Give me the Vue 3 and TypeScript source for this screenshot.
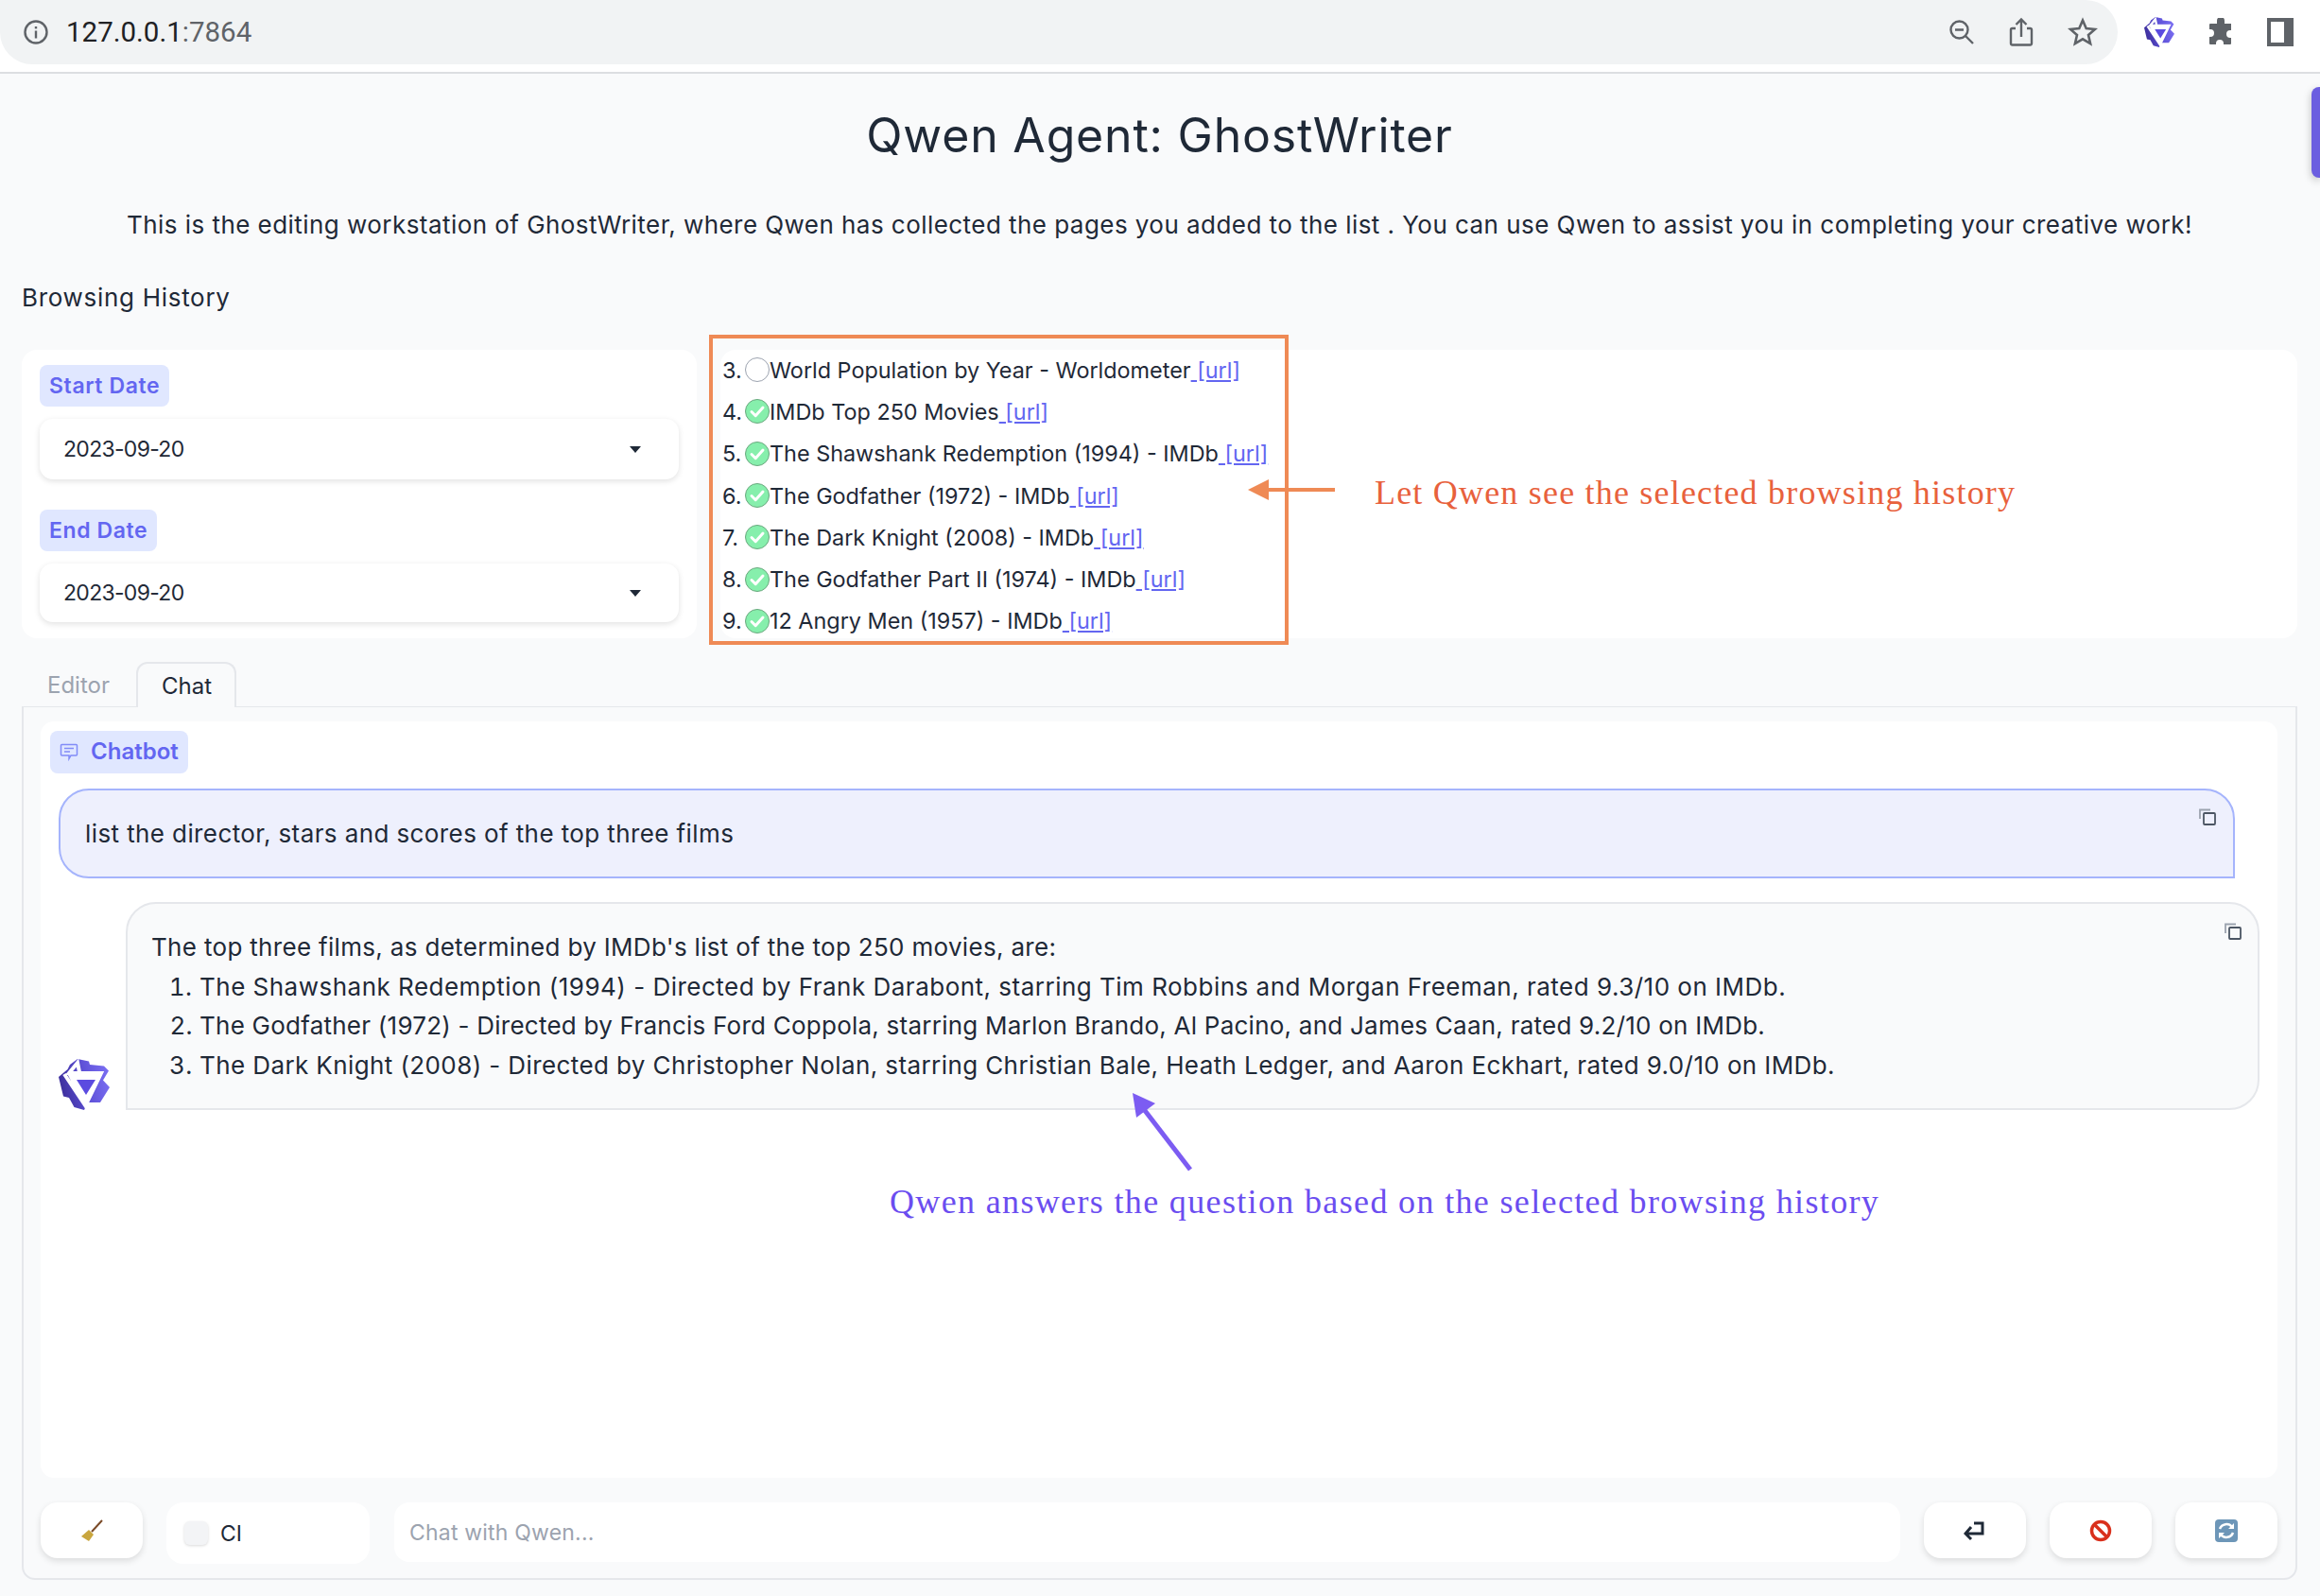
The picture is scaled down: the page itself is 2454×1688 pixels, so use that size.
<script setup lang="ts">
interface HistoryRow {
  index: number
  title: string
  checked: boolean
}

const historyRows: HistoryRow[] = [
  { index: 3, title: 'World Population by Year - Worldometer', checked: false },
  { index: 4, title: 'IMDb Top 250 Movies', checked: true },
  { index: 5, title: 'The Shawshank Redemption (1994) - IMDb', checked: true },
  { index: 6, title: 'The Godfather (1972) - IMDb', checked: true },
  { index: 7, title: 'The Dark Knight (2008) - IMDb', checked: true },
  { index: 8, title: 'The Godfather Part II (1974) - IMDb', checked: true },
  { index: 9, title: '12 Angry Men (1957) - IMDb', checked: true },
]

const dateFields = ['Start Date', 'End Date']

const answers = [
  'The Shawshank Redemption (1994) - Directed by Frank Darabont, starring Tim Robbins and Morgan Freeman, rated 9.3/10 on IMDb.',
  'The Godfather (1972) - Directed by Francis Ford Coppola, starring Marlon Brando, Al Pacino, and James Caan, rated 9.2/10 on IMDb.',
  'The Dark Knight (2008) - Directed by Christopher Nolan, starring Christian Bale, Heath Ledger, and Aaron Eckhart, rated 9.0/10 on IMDb.',
]

// logo outline and its white strands, shared by the toolbar icon and the avatar
const logoOutline = 'M20 0 32 2.400 33 6 48 7.400 53 12.500 47 22.600 54 30 44 46H31L27 54 16.500 51 11 41 5 39.500 0 19 9.500 11 12 6z'
const logoStrands = 'M20 4 11 15H45L29 48zM6 16 30 52M11 15 29 48'
const logoCore = 'M19 22H39L29 38z'
</script>

<template>
  <div class="page">
    <header class="browser">
      <div class="address">
        <svg class="info" viewBox="0 0 28 28" width="28" height="28">
          <circle cx="14" cy="14" r="11.5" fill="none" stroke="#5f6368" stroke-width="2.4" />
          <rect x="12.8" y="12.5" width="2.4" height="8" fill="#5f6368" />
          <rect x="12.8" y="8" width="2.4" height="2.4" fill="#5f6368" />
        </svg>
        <span class="host">127.0.0.1<span class="port">:7864</span></span>
        <div class="address-icons">
          <svg viewBox="0 0 28 28" width="28" height="28" fill="none" stroke="#5f6368" stroke-width="2.4">
            <circle cx="11.5" cy="11.5" r="9" />
            <path d="M7 11.5h9M18 18l8 8" />
          </svg>
          <svg viewBox="0 0 28 32" width="28" height="32" fill="none" stroke="#5f6368" stroke-width="2.4">
            <path d="M8 12H4.500a1.500 1.500 0 0 0-1.500 1.500V28a1.500 1.500 0 0 0 1.500 1.500h19A1.500 1.500 0 0 0 25 28V13.500a1.500 1.500 0 0 0-1.500-1.500H20" />
            <path d="M14 21V3M8.500 8 14 2.500 19.500 8" />
          </svg>
          <svg viewBox="0 0 32 32" width="32" height="32" fill="none" stroke="#5f6368" stroke-width="2.6">
            <path d="M16 3.500l3.700 8.500 9.300.9-7 6.100 2.100 9.100-8.100-4.800-8.100 4.800 2.100-9.100-7-6.100 9.300-.9z" />
          </svg>
        </div>
      </div>
      <div class="extensions">
        <svg viewBox="0 0 54 54" width="32" height="32">
          <defs>
            <linearGradient id="logoFillSmall" x1="0" y1="0.6" x2="1" y2="0.4">
              <stop offset="0" stop-color="#3a2c98" />
              <stop offset="0.55" stop-color="#5f52d8" />
              <stop offset="1" stop-color="#7a6ef2" />
            </linearGradient>
          </defs>
          <path :d="logoOutline" fill="url(#logoFillSmall)" />
          <path :d="logoStrands" fill="none" stroke="#fff" stroke-width="4" />
          <path d="M11 15H45L29 48z" fill="#fff" />
          <path :d="logoCore" fill="#5b4be0" />
        </svg>
        <svg viewBox="0 0 30 30" width="30" height="30">
          <path d="M11 3a4 4 0 0 1 8 0v3h7v7h-1a4 4 0 0 0 0 8h1v6a1 1 0 0 1-1 1h-7v-1a4 4 0 0 0-8 0v1H4a1 1 0 0 1-1-1v-7h1a4 4 0 0 0 0-8H3V7a1 1 0 0 1 1-1h7z" fill="#5f6368" />
        </svg>
        <svg viewBox="0 0 28 30" width="28" height="30">
          <path d="M0 0h28v30H0zM4 4v22h14V4z" fill="#5f6368" fill-rule="evenodd" />
        </svg>
      </div>
    </header>

    <div class="scroll-tab"></div>

    <main class="content">
      <h1 class="title">Qwen Agent: GhostWriter</h1>
      <p class="intro">
        This is the editing workstation of GhostWriter, where Qwen has collected the pages you added to the list . You can use Qwen to assist you in completing your creative work!
      </p>
      <div class="section-name">Browsing History</div>

      <section class="history">
        <div class="dates">
          <div v-for="field in dateFields" :key="field" class="date-field">
            <span class="badge">{{ field }}</span>
            <div class="select">
              <span class="date-value">2023-09-20</span>
              <span class="caret"></span>
            </div>
          </div>
        </div>
        <div class="pages">
          <div v-for="row in historyRows" :key="row.index" class="page-row">
            <span class="page-num">{{ row.index }}.</span>
            <span class="tick" :class="{ on: row.checked }">
              <svg v-if="row.checked" viewBox="0 0 24 24" width="24" height="24">
                <path d="M6 12.500l4.200 4.200L18 8" fill="none" stroke="#fff" stroke-width="3" stroke-linecap="round" stroke-linejoin="round" />
              </svg>
            </span>
            <span class="page-title">{{ row.title }}</span><a class="page-link" href="#"> [url]</a>
          </div>
        </div>
      </section>

      <nav class="tabs">
        <span class="tab">Editor</span>
        <span class="tab active">Chat</span>
      </nav>

      <section class="panel">
        <div class="chat-card">
          <span class="badge chat-badge">
            <svg viewBox="0 0 20 20" width="20" height="20" fill="none" stroke="#818cf8" stroke-width="1.500">
              <path d="M2.500 2.500h15a1 1 0 0 1 1 1v9.500a1 1 0 0 1-1 1h-5.500l-2 3.500v-3.500H2.500a1 1 0 0 1-1-1V3.500a1 1 0 0 1 1-1z" />
              <path d="M5 6.500h10M5 10h6" />
            </svg>
            Chatbot
          </span>

          <div class="bubble user">
            list the director, stars and scores of the top three films
            <svg class="copy" viewBox="0 0 18 18" width="18" height="18" fill="none" stroke-width="1.800">
              <path d="M1 11V1.500h11" stroke="#9ca3af" />
              <rect x="5" y="5" width="12" height="12" rx="1" stroke="#4b5563" />
            </svg>
          </div>

          <div class="bot-row">
            <svg class="avatar" viewBox="0 0 54 54" width="54" height="54">
              <defs>
                <linearGradient id="logoFill" x1="0" y1="0.6" x2="1" y2="0.4">
                  <stop offset="0" stop-color="#3a2c98" />
                  <stop offset="0.55" stop-color="#5f52d8" />
                  <stop offset="1" stop-color="#7a6ef2" />
                </linearGradient>
              </defs>
              <path :d="logoOutline" fill="url(#logoFill)" />
              <path :d="logoStrands" fill="none" stroke="#fff" stroke-width="4" />
              <path d="M11 15H45L29 48z" fill="#fff" />
              <path :d="logoCore" fill="#5b4be0" />
            </svg>
            <div class="bubble bot">
              <p>The top three films, as determined by IMDb's list of the top 250 movies, are:</p>
              <ol>
                <li v-for="answer in answers" :key="answer">{{ answer }}</li>
              </ol>
              <svg class="copy" viewBox="0 0 18 18" width="18" height="18" fill="none" stroke-width="1.800">
                <path d="M1 11V1.500h11" stroke="#9ca3af" />
                <rect x="5" y="5" width="12" height="12" rx="1" stroke="#4b5563" />
              </svg>
            </div>
          </div>
        </div>

        <div class="controls">
          <button class="btn">
            <svg viewBox="0 0 24 24" width="24" height="24">
              <path d="M23 1 12 13" stroke="#7a4a28" stroke-width="2" />
              <path d="M9 11l5 5-5 7-8-5z" fill="#c9a63e" />
            </svg>
          </button>
          <label class="ci"><span class="ci-box"></span>CI</label>
          <div class="chat-input">Chat with Qwen...</div>
          <button class="btn">
            <svg viewBox="0 0 24 24" width="24" height="24" fill="none" stroke="#1f2937" stroke-width="3">
              <path d="M2 15h18V4h-9M8 8 2 15l6 6" />
            </svg>
          </button>
          <button class="btn">
            <svg viewBox="0 0 24 24" width="24" height="24" fill="none" stroke="#d9301c" stroke-width="3.500">
              <circle cx="12" cy="12" r="9.500" />
              <path d="M5 5l14 14" />
            </svg>
          </button>
          <button class="btn">
            <svg viewBox="0 0 24 24" width="24" height="24">
              <rect width="24" height="24" rx="4" fill="#6d96b8" />
              <path d="M5 10a7.500 7.500 0 0 1 13-2M19 14a7.500 7.500 0 0 1-13 2" fill="none" stroke="#fff" stroke-width="2.500" />
              <path d="M20 4v6h-6zM4 20v-6h6z" fill="#fff" />
            </svg>
          </button>
        </div>
      </section>
    </main>

    <!-- hand-drawn annotations sitting on top of the screenshot -->
    <div class="mark-box"></div>
    <svg class="mark-arrow orange" viewBox="0 0 100 32" width="100" height="32">
      <path d="M94 16H22" stroke="#ef8a55" stroke-width="4" />
      <path d="M2 16 24 5v22z" fill="#ef8a55" />
    </svg>
    <div class="mark-text red">Let Qwen see the selected browsing history</div>
    <svg class="mark-arrow purple" viewBox="0 0 72 90" width="72" height="90">
      <path d="M66 85 16 20" stroke="#7c5cf2" stroke-width="5" />
      <path d="M5 4 29 15 9 30z" fill="#7c5cf2" />
    </svg>
    <div class="mark-text violet">Qwen answers the question based on the selected browsing history</div>
  </div>
</template>

<style>
html,
body {
  margin: 0;
  background: #f9fafb;
}
</style>

<style scoped>
.page {
  position: relative;
  width: 2454px;
  height: 1688px;
  overflow: hidden;
  background: #f9fafb;
  color: #1f2937;
  font-family: Inter, 'Open Sans', sans-serif;
}

.browser {
  display: flex;
  justify-content: space-between;
  height: 76px;
  background: #fff;
  border-bottom: 2px solid #dcdee1;
}

.address {
  display: flex;
  align-items: center;
  width: 2240px;
  height: 68px;
  box-sizing: border-box;
  padding-left: 24px;
  background: #f1f3f4;
  border-radius: 0 34px 34px 34px;
  font-family: Roboto, sans-serif;
  font-size: 29.5px;
}

.info {
  margin-right: 18px;
}

.host {
  color: #202124;
}

.port {
  color: #5f6368;
}

.address-icons {
  display: flex;
  align-items: center;
  gap: 35px;
  margin-left: auto;
  margin-right: 21px;
}

.extensions {
  display: flex;
  align-items: center;
  gap: 34px;
  height: 68px;
  margin-right: 28px;
}

.scroll-tab {
  position: absolute;
  top: 92px;
  right: 0;
  width: 9px;
  height: 96px;
  background: #6b5ee0;
  border-radius: 8px 0 0 8px;
  box-shadow: 0 3px 8px rgba(0, 0, 0, 0.25);
}

.content {
  padding: 0 24px 0 23px;
}

.title {
  margin: 35px 0 0;
  font-size: 50px;
  line-height: 60px;
  font-weight: 400;
  text-align: center;
  letter-spacing: 0.8px;
}

.intro {
  margin: 47px 0 0;
  font-size: 26px;
  line-height: 36px;
  text-align: center;
  letter-spacing: 0.45px;
}

.section-name {
  margin-top: 43px;
  font-size: 26px;
  line-height: 32px;
  letter-spacing: 0.7px;
}

.history {
  display: flex;
  gap: 25px;
  margin-top: 39px;
  height: 305px;
}

.dates {
  width: 714px;
  box-sizing: border-box;
  padding: 16px 19px 0;
  background: #fff;
  border-radius: 16px;
}

.date-field + .date-field {
  margin-top: 32px;
}

.date-field + .date-field .select {
  height: 62px;
}

.badge {
  display: inline-flex;
  align-items: center;
  height: 44px;
  padding: 0 10px;
  background: #e0e7ff;
  border-radius: 8px;
  color: #6366f1;
  font-size: 23px;
  font-weight: 600;
  letter-spacing: 0.6px;
}

.select {
  display: flex;
  align-items: center;
  justify-content: space-between;
  height: 64px;
  margin-top: 13px;
  padding: 0 40px 0 25px;
  background: #fff;
  border-radius: 14px;
  box-shadow: 0 2px 6px rgba(0, 0, 0, 0.12);
  font-size: 23px;
}

.date-value {
  letter-spacing: -0.7px;
}

.caret {
  border-top: 7px solid #1f2937;
  border-left: 6px solid transparent;
  border-right: 6px solid transparent;
}

.pages {
  flex: 1;
  box-sizing: border-box;
  padding-left: 2px;
  background: #fff;
  border-radius: 16px;
}

.page-row {
  display: flex;
  align-items: center;
  height: 44.3px;
  font-size: 23.4px;
  white-space: pre;
}

.page-row:first-child {
  margin-top: -1px;
}

.page-num {
  width: 24px;
}

.tick {
  display: flex;
  align-items: center;
  justify-content: center;
  width: 26px;
  height: 26px;
  box-sizing: border-box;
  border: 1.500px solid #9ca3af;
  border-radius: 50%;
  background: #fff;
}

.tick.on {
  background: #86efac;
  border-color: #6aa87e;
}

.page-link {
  color: #6366f1;
  text-decoration: underline;
}

.tabs {
  display: flex;
  height: 48px;
  margin-top: 25px;
  margin-bottom: -1px;
}

.tab {
  display: flex;
  align-items: center;
  box-sizing: border-box;
  width: 121px;
  height: 48px;
  padding-left: 27px;
  font-size: 24px;
  color: #9ca3af;
}

.tab.active {
  position: relative;
  z-index: 1;
  width: 106px;
  padding-left: 25px;
  background: #f9fafb;
  color: #1f2937;
  border: 2px solid #e5e7eb;
  border-bottom: none;
  border-radius: 12px 12px 0 0;
}

.panel {
  height: 924px;
  box-sizing: border-box;
  padding: 15px 19px 0 18px;
  border: 2px solid #e5e7eb;
  border-top-width: 1px;
  border-radius: 0 0 14px 14px;
}

.chat-card {
  display: flex;
  flex-direction: column;
  align-items: flex-start;
  height: 800px;
  box-sizing: border-box;
  padding: 10px;
  background: #fff;
  border-radius: 14px;
}

.chat-badge {
  gap: 13px;
  height: 45px;
  padding: 0 10px 2px;
  box-sizing: border-box;
  font-weight: 600;
  font-size: 24px;
  letter-spacing: 0;
}

.bubble {
  position: relative;
  box-sizing: border-box;
  font-size: 26px;
  letter-spacing: 0.4px;
}

.bubble.user {
  display: flex;
  align-items: center;
  width: 2302px;
  height: 95px;
  margin: 16px 0 0 9px;
  padding: 0 26px;
  background: #eef0fd;
  border: 2px solid #a5b4fc;
  border-radius: 32px 32px 0 32px;
}

.bubble.user .copy {
  position: absolute;
  top: 19px;
  right: 18px;
}

.bot-row {
  display: flex;
  align-items: flex-end;
  gap: 17px;
  margin: 25px 0 0 9px;
}

.avatar {
  flex: none;
}

.bubble.bot {
  width: 2257px;
  height: 220px;
  padding: 25px 25px 0;
  background: #f9fafb;
  border: 2px solid #e5e7eb;
  border-radius: 32px 32px 32px 0;
  line-height: 41.7px;
}

.bubble.bot p {
  margin: 0;
  letter-spacing: 0.32px;
}

.bubble.bot ol {
  margin: 0;
  padding-left: 51px;
}

.bubble.bot li:nth-child(1) {
  letter-spacing: 0.49px;
}

.bubble.bot li:nth-child(2) {
  letter-spacing: 0.24px;
}

.bubble.bot .copy {
  position: absolute;
  top: 20px;
  right: 17px;
}

.controls {
  display: flex;
  align-items: flex-start;
  gap: 25px;
  margin-top: 26px;
}

.btn {
  display: flex;
  align-items: center;
  justify-content: center;
  flex: none;
  width: 108px;
  height: 59px;
  padding: 0;
  border: none;
  background: #fff;
  border-radius: 18px;
  box-shadow: 0 3px 7px rgba(0, 0, 0, 0.12);
}

.ci {
  display: flex;
  align-items: center;
  flex: none;
  width: 215px;
  height: 65px;
  box-sizing: border-box;
  padding-left: 19px;
  gap: 13px;
  background: #fff;
  border-radius: 18px;
  font-size: 23px;
}

.ci-box {
  width: 25px;
  height: 25px;
  background: #f3f4f6;
  border-radius: 6px;
  box-shadow: 0 1px 3px rgba(0, 0, 0, 0.15);
}

.chat-input {
  flex: 1;
  display: flex;
  align-items: center;
  height: 63px;
  margin-left: 1px;
  padding-left: 16px;
  background: #fff;
  border-radius: 16px;
  color: #9ca3af;
  font-size: 23px;
  letter-spacing: 0.2px;
}

.mark-box {
  position: absolute;
  left: 750px;
  top: 354px;
  width: 613px;
  height: 328px;
  box-sizing: border-box;
  border: 4px solid #ef8a55;
}

.mark-arrow {
  position: absolute;
}

.mark-arrow.orange {
  left: 1318px;
  top: 502px;
}

.mark-arrow.purple {
  left: 1193px;
  top: 1152px;
}

.mark-text {
  position: absolute;
  font-family: 'Liberation Serif', serif;
  white-space: nowrap;
}

.mark-text.red {
  left: 1454px;
  top: 500px;
  font-size: 36px;
  line-height: 42px;
  letter-spacing: 1.2px;
  color: #e8613c;
}

.mark-text.violet {
  left: 941px;
  top: 1250px;
  font-size: 36px;
  line-height: 42px;
  letter-spacing: 1.35px;
  color: #6b4df0;
}
</style>
